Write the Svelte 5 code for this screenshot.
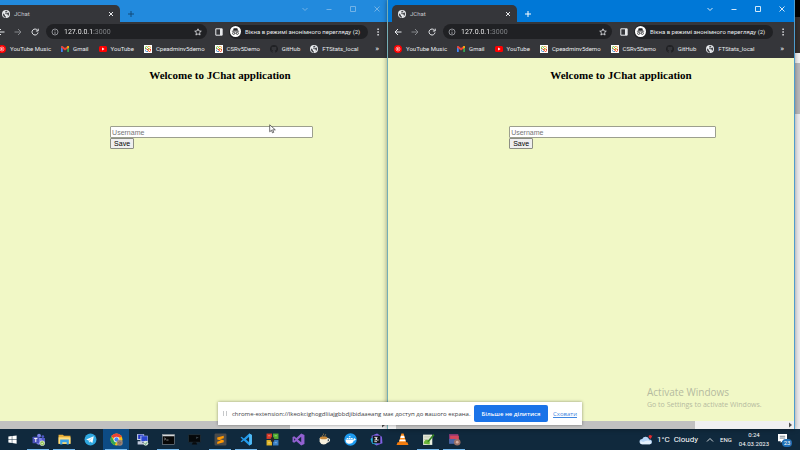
<script>
  const windows = [
    { id: 'left', active: false },
    { id: 'right', active: true }
  ];
  const bookmarks = [
    { icon: 'music', label: 'YouTube Music' },
    { icon: 'gmail', label: 'Gmail' },
    { icon: 'youtube', label: 'YouTube' },
    { icon: 'joomla', label: 'Cpeadminv5demo' },
    { icon: 'joomla', label: 'CSRv5Demo' },
    { icon: 'github', label: 'GitHub' },
    { icon: 'globe', label: 'FTStats_local' }
  ];
  const tasks = [
    { id: 'start' },
    { id: 'teams', open: true },
    { id: 'files', open: true },
    { id: 'telegram' },
    { id: 'chrome', open: true, active: true },
    { id: 'putty' },
    { id: 'terminal', open: true },
    { id: 'monitor' },
    { id: 'sublime', open: true },
    { id: 'vscode', open: true },
    { id: 'blocks' },
    { id: 'studio' },
    { id: 'coffee' },
    { id: 'docker' },
    { id: 'datagrip' },
    { id: 'vlc' },
    { id: 'notepad', open: true },
    { id: 'recorder', open: true }
  ];
  let names = $state({ left: '', right: '' });
</script>

{#snippet favicon(name)}
  <svg class="favicon" viewBox="0 0 16 16" aria-hidden="true">
    {#if name === 'music'}
      <circle cx="8" cy="8" r="8" fill="#f00" />
      <circle cx="8" cy="8" r="4" fill="none" stroke="#fff" stroke-width="1.2" />
      <path d="M6.5 5.5 10.5 8l-4 2.5z" fill="#fff" />
    {:else if name === 'gmail'}
      <path d="M0 3h3.5v11H1a1 1 0 0 1-1-1z" fill="#4285f4" />
      <path d="M12.500 3H16v10a1 1 0 0 1-1 1h-2.500z" fill="#34a853" />
      <path d="M0 3.500C0 2 2 1.500 3.500 2.500L8 6l4.500-3.500C14 1.500 16 2 16 3.500V5l-8 6-8-6z" fill="#ea4335" />
      <path d="M12.500 2.500C14 1.500 16 2 16 3.500V5l-3.500 2.600z" fill="#fbbc04" />
    {:else if name === 'youtube'}
      <rect x="0" y="2" width="16" height="12" rx="3" fill="#f00" />
      <path d="M6.300 5 11 8l-4.700 3z" fill="#fff" />
    {:else if name === 'joomla'}
      <rect width="16" height="16" fill="#fff" />
      <path d="M3 8V5a2 2 0 0 1 4 0l4 4" fill="none" stroke="#7ac143" stroke-width="2" />
      <path d="M8 3h3a2 2 0 0 1 0 4l-4 4" fill="none" stroke="#f9a541" stroke-width="2" />
      <path d="M13 8v3a2 2 0 0 1-4 0L5 7" fill="none" stroke="#f44321" stroke-width="2" />
      <path d="M8 13H5a2 2 0 0 1 0-4" fill="none" stroke="#5091cd" stroke-width="2" />
    {:else if name === 'github'}
      <path d="M8 0a8 8 0 0 0-2.500 15.600V13c-2.500.4-3-1.500-3.500-2 2 0 1.500 1.500 3.500 1 .1-.6.400-1 .7-1.300C3.500 10.300 3 8.500 3.500 5.500L3.400 3.200l2.200.9a9 9 0 0 1 4.800 0l2.200-.9-.1 2.300c.5 3 0 4.800-2.700 5.200.5.500.7 1.200.7 2v2.900A8 8 0 0 0 8 0z" fill="#202124" />
    {:else}
      <circle cx="8" cy="8" r="8" fill="#e8eaed" />
      <path d="M2 6.500 6 10v2l2 1v2.500C3.500 15 1 11.500 2 6.500zM6 2.500 9.500 1.500 11 3 9 5H7v2H5.500L8 8.500h2.500l1.500 2-1 2.500c3-2 4-5 2.500-8L11 5.500 9 7" fill="#4a4c50" />
    {/if}
  </svg>
{/snippet}

{#snippet taskIcon(name)}
  <svg class="task-icon" viewBox="0 0 24 24" aria-hidden="true">
    {#if name === 'start'}
      <path d="M3 5.500 10.500 4.300v7.200H3zM11.500 4.200 21 3v8.500h-9.500zM3 12.500h7.500v7.200L3 18.500zM11.500 12.500H21V21l-9.500-1.200z" fill="#fff" />
    {:else if name === 'teams'}
      <circle cx="13" cy="5" r="3.500" fill="#7b83eb" />
      <circle cx="20" cy="6.500" r="2.500" fill="#5059c9" />
      <path d="M16 9h8v7a4 4 0 0 1-8 2z" fill="#5059c9" />
      <path d="M8 9h10v8a5.500 5.500 0 0 1-10 2z" fill="#7b83eb" />
      <rect x="1" y="7" width="12" height="12" rx="1" fill="#4b53bc" />
      <path d="M4 10h6M7 10v6.500" stroke="#fff" stroke-width="1.800" />
      <circle cx="19" cy="19" r="4.500" fill="#92c353" stroke="#fff" />
      <path d="m17 19 1.500 1.500L21 17.500" fill="none" stroke="#fff" stroke-width="1.200" />
    {:else if name === 'files'}
      <path d="M1 3h8l2 2h12v15H1z" fill="#e9b03a" />
      <path d="M1 8h22v12H1z" fill="#ffdf7e" />
      <path d="M4 12h16v9h-4v-4H8v4H4z" fill="#3aa0e6" />
    {:else if name === 'telegram'}
      <circle cx="12" cy="12" r="11" fill="#2fa8e0" />
      <path d="m4 12 14-6-2.500 12.500-4-3-2.200 2.200-.5-4z" fill="#fff" />
      <path d="m9 13.500 7-5.500-5 6.500-1.600 3z" fill="#b9dcef" />
    {:else if name === 'chrome'}
      <circle cx="12" cy="12" r="11" fill="#fbc116" />
      <path d="M12 12 2.500 6.500a11 11 0 0 1 19 0L21 8h-9z" fill="#ea4335" />
      <path d="M2.500 6.500 8 15l4 1-3.500 6.500A11 11 0 0 1 2.500 6.500z" fill="#34a853" />
      <circle cx="12" cy="12" r="5.200" fill="#fff" />
      <circle cx="12" cy="12" r="4" fill="#4285f4" />
      <circle cx="18" cy="18" r="5.500" fill="#9a8478" />
      <path d="M15 18q3-3 6 0M16 20h4" stroke="#5b463d" fill="none" />
    {:else if name === 'putty'}
      <path d="M2 2h13v11H2z" fill="#c9d2e8" />
      <path d="M4 3h10v8H4z" fill="#1f35c4" />
      <path d="M8 5h14v12H8z" fill="#a9b8ea" />
      <path d="M10 6h11v9H10z" fill="#2a45d0" />
      <path d="M3 15h7l5 6H3z" fill="#c2cadd" />
      <circle cx="18" cy="19" r="4.500" fill="#d8e3dc" />
      <path d="m16 19 1.500 2 3-4" stroke="#358d4e" fill="none" stroke-width="1.500" />
    {:else if name === 'terminal'}
      <rect x="1" y="3" width="22" height="18" fill="#080808" stroke="#949da5" />
      <path d="M1 3h22v3H1z" fill="#d3d7da" />
      <path d="m4 9 3 2-3 2M8 13h4" stroke="#ddd" fill="none" />
    {:else if name === 'monitor'}
      <rect x="1" y="3" width="22" height="14" rx="1" fill="#05080a" stroke="#30383e" />
      <path d="M9 17h6l2 4H7z" fill="#080b0d" />
      <path d="m15 7 5 1-5 3z" fill="#37434a" />
    {:else if name === 'sublime'}
      <rect x="1" y="1" width="22" height="22" rx="2" fill="#4b4b4b" />
      <path d="M18 5v4.500l-7 2 7 2V17L6 20.500V16l7-2-7-2V8.500z" fill="#ff9800" />
    {:else if name === 'vscode'}
      <path d="m17 1 5 2.500v17L17 23 7 14l-4 3-2-1.500L5 12 1 8.500 3 7l4 3zM17 7l-6 5 6 5z" fill="#239bec" />
      <path d="m17 1 5 2.500v17L17 23z" fill="#51baf5" />
    {:else if name === 'blocks'}
      <path d="M1 1h10v10H1z" fill="#d83a28" />
      <path d="M13 1h10v10H13z" fill="#55ac31" />
      <path d="M1 13h10v10H1z" fill="#e1b629" />
      <path d="M13 13h10v10H13z" fill="#387fc6" />
      <path d="M9 8h6v8H9z" fill="#2a2622" />
      <path d="M4 4h4v2H4zM16 4h4v2h-4zM4 17h4v2H4zM16 17h4v2h-4z" fill="#fff6" />
    {:else if name === 'studio'}
      <path d="m17 1 6 2.500v17L17 23l-9-8-4 3-3-1.500v-9L4 6l4 3zM4 9.500v5L6.500 12zM17 7l-6 5 6 5z" fill="#9261d1" />
    {:else if name === 'coffee'}
      <path d="M3 9h15v7q-2 5-7.500 5T3 16z" fill="#f7f1df" />
      <ellipse cx="10.500" cy="9" rx="7" ry="2.500" fill="#c98a3c" />
      <path d="M17 11c6-2 6 5-1 6" fill="none" stroke="#f7f1df" stroke-width="2" />
      <path d="M9 7c-3-3 3-3 1-6M13 7c-2-2 2-3 1-5" fill="none" stroke="#e9ad56" />
    {:else if name === 'docker'}
      <circle cx="12" cy="12" r="11.500" fill="#1d9bf0" />
      <path d="M3 12h14c1 0 2-1 1-3 2 0 2 2 4 2-1 3-3 3-4 3-1 4-4 6-8 6s-7-2-7-8z" fill="#fff" />
      <path d="M5 9h3v2H5zM9 9h3v2H9zM13 9h3v2h-3zM9 6h3v2H9z" fill="#fff" />
    {:else if name === 'datagrip'}
      <path d="m3 5 10-4 9 6 1 12-11 4-9-6z" fill="#8062e6" />
      <path d="m1 11 7-5 4 15-8-1z" fill="#24bce7" />
      <rect x="5" y="5" width="14" height="14" fill="#11131a" />
      <path d="M8 8h3v5H8M14 8h-2v5h4M8 16h5" stroke="#fff" fill="none" stroke-width="1.500" />
    {:else if name === 'vlc'}
      <path d="M10 1h4l5 17H5z" fill="#ff8b19" />
      <path d="m9 5-1 4h8l-1-4zM7 12l-1 3h12l-1-3z" fill="#fff" />
      <path d="M3 17h18l2 5H1z" fill="#f57c0c" />
    {:else if name === 'notepad'}
      <path d="M2 3h17v19H2z" fill="#edf0e0" />
      <path d="M4 6h12M4 9h10M4 12h8" stroke="#a0a890" />
      <path d="M3 20q1-9 8-7 5 2 3 8z" fill="#6cb63b" />
      <path d="m21 2 2 2-10 12-3 1 1-3z" fill="#33851f" />
    {:else}
      <path d="M2 2h17v12H2z" fill="#8f3b74" />
      <path d="M4 5h16v13H4z" fill="#d5475c" />
      <path d="M2 11h13v9H2z" fill="#4c66a7" />
      <circle cx="17" cy="17" r="6" fill="#9b7065" />
      <circle cx="17" cy="17" r="2.500" fill="#d8b0a3" />
    {/if}
  </svg>
{/snippet}

<div class="desktop">
  <main class="workspace">
    {#each windows as win (win.id)}
      <section class="pane {win.id}">
        <div class="browser" class:focused={win.active}>
          <header class="title-bar">
            <div class="tab">
              {@render favicon('globe')}
              <span>JChat</span>
              <button class="glyph tab-close" aria-label="Close tab">
                <svg viewBox="0 0 8 8"><path d="m2 2 4 4m0-4L2 6" /></svg>
              </button>
            </div>
            <button class="glyph new-tab" aria-label="New tab">
              <svg viewBox="0 0 8 8"><path d="M4 1v6M1 4h6" /></svg>
            </button>
            <div class="controls">
              <button class="glyph" aria-label="Search tabs"><svg viewBox="0 0 8 8"><path d="m1.500 3 2.500 2.500L6.500 3" /></svg></button>
              <button class="glyph" aria-label="Minimize"><svg viewBox="0 0 8 8"><path d="M1.500 4.500h5" /></svg></button>
              <button class="glyph" aria-label="Maximize"><svg viewBox="0 0 8 8"><path d="M1.500 1.500h5v5h-5z" /></svg></button>
              <button class="glyph" aria-label="Close"><svg viewBox="0 0 8 8"><path d="m1.500 1.500 5 5m0-5-5 5" /></svg></button>
            </div>
          </header>

          <div class="toolbar">
            <nav class="history">
              <button class="glyph" aria-label="Back"><svg viewBox="0 0 8 8"><path d="M7.500 4H1m3-3L1 4l3 3" /></svg></button>
              <button class="glyph dim" aria-label="Forward"><svg viewBox="0 0 8 8"><path d="M.5 4H7M4 1l3 3-3 3" /></svg></button>
              <button class="glyph" aria-label="Reload"><svg viewBox="0 0 8 8"><path d="M6.500 2.300A3 3 0 1 0 7 4.500M7.200.7v2.300H4.900" /></svg></button>
            </nav>
            <div class="omnibox">
              <svg class="info" viewBox="0 0 8 8" aria-hidden="true"><circle cx="4" cy="4" r="3" /><path d="M4 3.600V6M4 2v.8" /></svg>
              <input aria-label="Address" value="127.0.0.1:3000" />
              <button class="glyph" aria-label="Bookmark this page">
                <svg viewBox="0 0 10 10"><path d="m5 1 1.200 2.700 2.900.3-2.200 1.900.7 2.900L5 7.300 2.400 8.800l.7-2.900L.9 4l2.900-.3z" /></svg>
              </button>
            </div>
            <button class="glyph side" aria-label="Side panel">
              <svg viewBox="0 0 8 8"><path d="M.8.8h6.400v6.400H.8z" /><path d="M5 1h2v6H5z" class="solid" /></svg>
            </button>
            <button class="incognito">
              <svg viewBox="0 0 12 12" aria-hidden="true">
                <circle cx="6" cy="6" r="6" fill="#fff" />
                <path d="M4 2.500h4l.7 2.500H3.300zM2 5.200h8v.7H2z" fill="#202124" />
                <path d="M5 8q1-.5 2 0" fill="none" stroke="#202124" stroke-width=".6" />
                <circle cx="4" cy="8" r="1.200" fill="none" stroke="#202124" stroke-width=".8" />
                <circle cx="8" cy="8" r="1.200" fill="none" stroke="#202124" stroke-width=".8" />
              </svg>
              Вікна в режимі анонімного перегляду (2)
            </button>
            <button class="glyph menu" aria-label="Menu">
              <svg viewBox="0 0 8 8"><path class="solid" d="M3.400.5h1.400v1.400H3.400zM3.400 3.300h1.400v1.400H3.400zM3.400 6.100h1.400v1.400H3.400z" /></svg>
            </button>
          </div>

          <nav class="bookmarks">
            {#each bookmarks as mark}
              <a href="#{mark.label}">{@render favicon(mark.icon)}{mark.label}</a>
            {/each}
            <button class="more" aria-label="More bookmarks">»</button>
          </nav>

          <div class="page">
            <div class="document">
              <h1>Welcome to JChat application</h1>
              <form onsubmit={(e) => e.preventDefault()}>
                <input type="text" placeholder="Username" aria-label="Username" bind:value={names[win.id]} />
                <button type="submit">Save</button>
              </form>
            </div>
          </div>
          <div class="scrollbar">
            <div class="thumb"></div>
            <svg viewBox="0 0 8 8" aria-hidden="true"><path d="m3 1.500 3 2.500-3 2.500z" /></svg>
          </div>
        </div>
      </section>
    {/each}
    <aside class="behind">
      <div class="behind-title"></div>
      <div class="behind-tools"></div>
      <div class="behind-arrow"></div>
      <div class="behind-thumb"></div>
    </aside>

    <svg class="cursor" viewBox="0 0 10 14" aria-hidden="true"><path d="M1 1v10l2.500-2.200L5 12.500l1.800-.8-1.600-3.500H9z" /></svg>

    <div class="watermark">
      <p class="big">Activate Windows</p>
      <p>Go to Settings to activate Windows.</p>
    </div>

    <div class="share-notice" role="status">
      <i class="grip"></i>
      <span>chrome-extension://lkeokcighogdliiajgbbdjibidaaeang має доступ до вашого екрана.</span>
      <button>Більше не ділитися</button>
      <a href="#hide">Сховати</a>
    </div>
  </main>

  <footer class="taskbar">
    {#each tasks as task (task.id)}
      <button class="task" class:open={task.open} class:active={task.active} aria-label={task.id}>
        {@render taskIcon(task.id)}
      </button>
    {/each}
    <div class="tray">
      <svg class="weather" viewBox="0 0 26 22" aria-hidden="true">
        <path d="M6 19a5 5 0 0 1 0-10 7 7 0 0 1 13 1 4.500 4.500 0 0 1 1 9z" fill="#b9d7f7" />
        <path d="M5 19q-4-2-2-6 5 3 9 0t10 1q1 4-2 5z" fill="#e4f0fc" />
        <path d="M18 3q3-3 5 0l2-1-2 5-2 2-3-3z" fill="#e3292d" />
      </svg>
      <span class="temperature">1°C&nbsp; Cloudy</span>
      <svg class="caret" viewBox="0 0 8 8" aria-hidden="true"><path d="m1 5.500 3-3 3 3" /></svg>
      <span>ENG</span>
      <time datetime="2023-03-04T00:24"><span>0:24</span><span>04.03.2023</span></time>
      <div class="messages">
        <svg viewBox="0 0 10 10" aria-hidden="true"><path d="M0 0h10v8H5L3 10V8H0z" fill="#fff" /><path d="M2 2.500h6M2 4.500h6" stroke="#6b7c88" /></svg>
        <b>23</b>
      </div>
    </div>
  </footer>
</div>

<style>
  :global(body) {
    margin: 0;
  }

  button,
  input {
    box-sizing: border-box;
    margin: 0;
    font: inherit;
  }

  .desktop {
    display: flex;
    flex-direction: column;
    height: 100vh;
    overflow: hidden;
    font-family: Roboto, 'Open Sans', sans-serif;
    font-size: 6px;
    line-height: 8px;
  }

  .desktop svg {
    display: block;
    flex: none;
  }

  .workspace {
    position: relative;
    flex: 1;
    min-height: 0;
    display: grid;
    grid-template-columns: 387fr 408fr 5px;
  }

  .pane {
    display: flex;
    min-width: 0;
    overflow: hidden;
  }

  .right {
    box-shadow: 0 0 5px #0006;
    border-left: 1px solid #75aeb5;
    border-right: 1px solid #4e9ccc;
    box-sizing: border-box;
    z-index: 1;
  }

  .browser {
    flex: 1;
    min-width: 0;
    display: flex;
    flex-direction: column;
    background: #f1f8c6;
  }

  .left .browser {
    flex: none;
    width: calc(100% + 11px);
    margin-left: -9px;
  }

  .title-bar {
    display: flex;
    flex: none;
    height: 22px;
    padding-left: 4px;
    background: #228add;
    color: #124a78;
  }

  .focused .title-bar {
    background: #0078d7;
    color: #fff;
  }

  .tab {
    display: flex;
    align-items: center;
    gap: 4px;
    box-sizing: border-box;
    width: 125px;
    height: 17px;
    margin-top: 5px;
    padding: 0 5px 0 6px;
    border-radius: 5px 5px 0 0;
    background: #35363a;
    color: #c5c8cc;
  }

  .left .tab {
    padding-left: 7px;
  }

  .favicon {
    width: 8px;
    height: 8px;
  }

  .glyph {
    display: grid;
    place-items: center;
    flex: none;
    width: 8px;
    padding: 0;
    border: 0;
    background: none;
    color: #e8eaed;
  }

  .glyph svg {
    width: 8px;
    height: 8px;
    fill: none;
    stroke: currentColor;
    stroke-width: 1;
  }

  .glyph .solid {
    fill: currentColor;
    stroke: none;
  }

  .tab-close {
    margin-left: auto;
  }

  .new-tab {
    margin: 5px 0 0 7px;
    color: inherit;
  }

  .controls {
    display: flex;
    height: 17px;
    margin-left: auto;
  }

  .controls .glyph {
    width: 24px;
    color: #72b3e7;
  }

  .focused .controls .glyph {
    color: #d2e8f9;
  }

  .toolbar {
    display: flex;
    align-items: center;
    flex: none;
    height: 19px;
    padding: 0 7px 0 6px;
    background: #35363a;
  }

  .history {
    display: flex;
    gap: 9px;
    margin-right: 7px;
  }

  .glyph.dim {
    color: #85878b;
  }

  .omnibox {
    display: flex;
    align-items: center;
    flex: 1;
    min-width: 0;
    height: 15px;
    padding: 0 5px;
    border-radius: 8px;
    background: #202124;
  }

  .info {
    width: 8px;
    height: 8px;
    fill: none;
    stroke: #a7aaae;
    stroke-width: 0.8;
  }

  .omnibox input {
    flex: 1;
    min-width: 0;
    height: 11px;
    padding: 0 0 0 5px;
    border: 0;
    outline: 0;
    background: linear-gradient(90deg, #fff 35px, #85888c 35px);
    -webkit-background-clip: text;
    background-clip: text;
    color: transparent;
    font-size: 7px;
  }

  .side {
    margin: 0 6px 0 8px;
  }

  .incognito {
    display: flex;
    align-items: center;
    flex: none;
    gap: 4px;
    width: 139px;
    height: 14px;
    padding: 0 1px;
    border: 0;
    border-radius: 7px;
    background: #202124;
    color: #e8eaed;
    white-space: nowrap;
  }

  .incognito svg {
    width: 11px;
    height: 11px;
  }

  .menu {
    margin-left: 6px;
  }

  .bookmarks {
    display: flex;
    align-items: center;
    flex: none;
    gap: 10px;
    height: 17px;
    padding: 0 8px 2px 6px;
    box-sizing: border-box;
    background: #35363a;
    color: #e8eaed;
    white-space: nowrap;
  }

  .left .bookmarks {
    padding-left: 7px;
  }

  .bookmarks a {
    display: flex;
    align-items: center;
    gap: 4px;
    color: inherit;
    text-decoration: none;
  }

  .more {
    width: 8px;
    margin-left: auto;
    padding: 0;
    border: 0;
    background: none;
    color: inherit;
    font-size: 8px;
  }

  .page {
    flex: 1;
    min-height: 0;
    overflow: hidden;
  }

  .document {
    width: calc(100% + 60px);
    font-family: 'Liberation Sans', sans-serif;
    font-size: 7px;
  }

  h1 {
    margin: 0;
    padding-top: 11px;
    font: bold 11px/13px 'Liberation Serif', serif;
    text-align: center;
    color: #000;
  }

  form {
    display: flex;
    flex-direction: column;
    align-items: flex-start;
    width: calc(50% - 26px);
    margin: 44px 0 0 26%;
  }

  form input {
    width: 100%;
    height: 12px;
    padding: 0 1px;
    border: 1px solid #9c9f8e;
    border-radius: 1px;
    background: #fff;
  }

  form input::placeholder {
    color: #757575;
  }

  form button {
    height: 11px;
    padding: 0 3px;
    border: 1px solid #8c8e84;
    border-radius: 1px;
    background: #efefef;
    color: #000;
  }

  .scrollbar {
    display: flex;
    align-items: center;
    justify-content: space-between;
    flex: none;
    height: 8px;
    padding-left: 8px;
    background: #f0f0f1;
  }

  .left .scrollbar {
    padding-right: 2px;
  }

  .thumb {
    width: 75%;
    height: 8px;
    background: #c1c1c1;
  }

  .scrollbar svg {
    width: 8px;
    height: 8px;
    fill: #505050;
  }

  .behind {
    display: flex;
    flex-direction: column;
    background: #ededf0;
  }

  .behind-title {
    height: 17px;
    background: #000;
  }

  .behind-tools {
    height: 36px;
    background: #35302e;
  }

  .behind-arrow {
    height: 10px;
    background: #f5f5f5;
  }

  .behind-thumb {
    height: 51px;
    background: #b9b9bc;
  }

  .cursor {
    position: absolute;
    left: 269px;
    top: 124px;
    width: 7px;
    height: 10px;
    fill: #fff;
    stroke: #333;
    stroke-width: 1;
  }

  .watermark {
    position: absolute;
    right: 34px;
    bottom: 20px;
    z-index: 2;
    width: 119px;
    color: #b5baa0;
    font-family: 'Open Sans', sans-serif;
    font-size: 7px;
    white-space: nowrap;
  }

  .watermark p {
    margin: 0;
  }

  .watermark .big {
    margin-bottom: 3px;
    font-size: 10px;
    line-height: 12px;
  }

  .share-notice {
    position: absolute;
    left: 50%;
    bottom: 4px;
    z-index: 3;
    display: flex;
    align-items: center;
    box-sizing: border-box;
    width: 364px;
    height: 23px;
    padding: 0 5px;
    transform: translateX(-50%);
    background: #fff;
    box-shadow: 0 0 3px #0006;
    color: #3c4043;
    font-family: 'Open Sans', sans-serif;
    white-space: nowrap;
  }

  .grip {
    width: 2px;
    height: 5px;
    margin-right: 5px;
    border: solid #c6c8ca;
    border-width: 0 1px;
  }

  .share-notice button {
    width: 74px;
    height: 17px;
    margin: 0 5px 0 auto;
    padding: 0;
    border: 0;
    border-radius: 2px;
    background: #1a73e8;
    color: #fff;
    font-weight: 600;
  }

  .share-notice a {
    color: #3f86e0;
  }

  .taskbar {
    display: flex;
    flex: none;
    height: 21px;
    background: #10293d;
    color: #fff;
  }

  .task {
    position: relative;
    display: grid;
    place-items: center;
    flex: none;
    width: 26px;
    padding: 0;
    border: 0;
    background: none;
  }

  .task:first-child {
    width: 25px;
  }

  .task.active {
    background: #0d4b84;
  }

  .task.open::after {
    content: '';
    position: absolute;
    inset: auto 2px 0;
    height: 1px;
    background: #76b9ed;
  }

  .task-icon {
    width: 13px;
    height: 13px;
  }

  .task:first-child .task-icon {
    width: 11px;
    height: 11px;
  }

  .tray {
    display: flex;
    align-items: center;
    margin-left: auto;
    padding-right: 8px;
    white-space: nowrap;
  }

  .weather {
    width: 14px;
    height: 12px;
    margin-right: 4px;
  }

  .temperature {
    font-size: 8px;
  }

  .caret {
    width: 8px;
    height: 8px;
    margin: 0 6px 0 8px;
    fill: none;
    stroke: #fff;
    stroke-width: 0.8;
  }

  time {
    display: flex;
    flex-direction: column;
    align-items: center;
    gap: 1px;
    margin: 0 9px 0 7px;
  }

  .messages {
    position: relative;
    width: 14px;
    height: 14px;
  }

  .messages svg {
    width: 9px;
    height: 9px;
    margin-top: 1px;
  }

  .messages b {
    position: absolute;
    right: 0;
    bottom: 0;
    width: 10px;
    border-radius: 5px;
    background: #1f6fb5;
    font-weight: 400;
    text-align: center;
  }
</style>
